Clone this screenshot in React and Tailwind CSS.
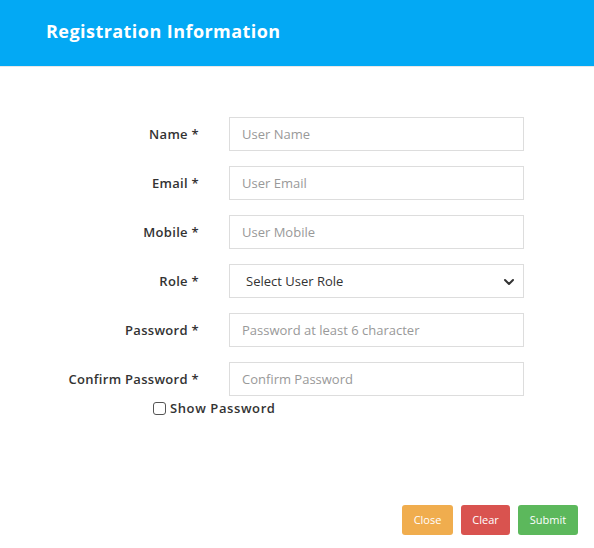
import { ChevronDown } from "lucide-react";

const fields = [
    { label: "Name *", placeholder: "User Name" },
    { label: "Email *", placeholder: "User Email" },
    { label: "Mobile *", placeholder: "User Mobile" },
    { label: "Role *", select: true },
    { label: "Password *", placeholder: "Password at least 6 character" },
    { label: "Confirm Password *", placeholder: "Confirm Password" },
];

export default function App() {
    return (
        <div className="w-[594px] h-[548px] bg-white flex flex-col font-['Open_Sans',sans-serif]">
            <div className="h-[67px] shrink-0 bg-[#03a9f4] flex items-center pl-[46px] pb-[3px] border-b border-[#e8e8e8]">
                <h1 className="text-[18px] font-bold text-white tracking-[0.45px]">Registration Information</h1>
            </div>

            <div className="flex flex-col gap-[15px] pt-[50px]">
                {fields.map((f) => (
                    <div key={f.label} className="flex items-center">
                        <label className="w-[199px] pt-[2px] text-right text-[13px] font-semibold text-[#333] tracking-[0.3px]">{f.label}</label>
                        <div className="ml-[30px] w-[295px] h-[34px] border border-[#ddd] flex items-center">
                            {f.select ? (
                                <div className="flex items-center justify-between w-full pl-[16px] pr-[6px] pt-[2px] text-[13px] text-[#333]">
                                    <span>Select User Role</span>
                                    <ChevronDown size={16} strokeWidth={3} />
                                </div>
                            ) : (
                                <input
                                    type="text"
                                    placeholder={f.placeholder}
                                    className="w-full h-full px-[12px] text-[13px] text-[#333] placeholder:text-[#999] outline-none"
                                />
                            )}
                        </div>
                    </div>
                ))}
            </div>

            <label className="flex items-center gap-[4px] ml-[153px] mt-[3px] text-[13px] font-semibold text-[#333] tracking-[0.6px]">
                <span className="w-[13px] h-[13px] border border-[#555] rounded-[3px] bg-white"></span>
                Show Password
            </label>

            <div className="mt-auto mb-[13px] flex justify-end gap-[8px] pr-[16px]">
                <button className="w-[51px] h-[30px] rounded-[3px] bg-[#f0ad4e] text-white text-[11px]">Close</button>
                <button className="w-[49px] h-[30px] rounded-[3px] bg-[#d9534f] text-white text-[11px]">Clear</button>
                <button className="w-[60px] h-[30px] rounded-[3px] bg-[#5cb85c] text-white text-[11px]">Submit</button>
            </div>
        </div>
    );
}
